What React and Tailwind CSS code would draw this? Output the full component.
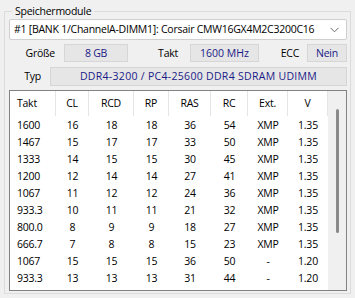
import React from "react"

const rows = [
  ["1600", "16", "18", "18", "36", "54", "XMP", "1.35"],
  ["1467", "15", "17", "17", "33", "50", "XMP", "1.35"],
  ["1333", "14", "15", "15", "30", "45", "XMP", "1.35"],
  ["1200", "12", "14", "14", "27", "41", "XMP", "1.35"],
  ["1067", "11", "12", "12", "24", "36", "XMP", "1.35"],
  ["933.3", "10", "11", "11", "21", "32", "XMP", "1.35"],
  ["800.0", "8", "9", "9", "18", "27", "XMP", "1.35"],
  ["666.7", "7", "8", "8", "15", "23", "XMP", "1.35"],
  ["1067", "15", "15", "15", "36", "50", "-", "1.20"],
  ["933.3", "13", "13", "13", "31", "44", "-", "1.20"],
]

const headers = ["Takt", "CL", "RCD", "RP", "RAS", "RC", "Ext.", "V"]
const cols = "grid-cols-[46px_33px_45px_35px_42px_37px_40px_40px]"

function ValueBox({ children, className = "" }) {
  return (
    <div className={"h-[18px] flex items-center justify-center bg-[#e6e6e6] border border-[#d6d6d6] text-[#1a1a86] " + className}>
      {children}
    </div>
  )
}

export default function App() {
  return (
    <div className="w-[355px] h-[298px] bg-[#f0f0f0] text-black text-[10.5px] tracking-[-0.25px] leading-none overflow-hidden" style={{ fontFamily: '"Open Sans", "Noto Sans", sans-serif' }}>
      <fieldset className="ml-[4px] mt-[3px] w-[347px] h-[291px] border border-[#dcdcdc] pl-[4px] pr-[3px]">
        <legend className="ml-[3px] px-[3px] h-[16px] leading-[16px]">Speichermodule</legend>

        <div className="h-[21px] bg-white border border-[#cfcfcf] rounded-[2px] flex items-center pl-[4px] pr-[7px]">
          <span className="flex-1 whitespace-nowrap">#1 [BANK 1/ChannelA-DIMM1]: Corsair CMW16GX4M2C3200C16</span>
          <svg width="9" height="6" viewBox="0 0 9 6" className="ml-1">
            <path d="M0.5 0.8 L4.5 4.8 L8.5 0.8" fill="none" stroke="#6a6a6a" strokeWidth="1" />
          </svg>
        </div>

        <div className="mt-[4px] flex items-center">
          <span className="w-[55px] text-right pr-[9px]">Größe</span>
          <ValueBox className="w-[64px]">8 GB</ValueBox>
          <span className="w-[62px] text-right pr-[12px]">Takt</span>
          <ValueBox className="w-[69px] tracking-normal">1600 MHz</ValueBox>
          <span className="w-[48px] text-right pr-[8px]">ECC</span>
          <ValueBox className="w-[40px]">Nein</ValueBox>
        </div>

        <div className="mt-[5px] flex items-center">
          <span className="w-[41px] text-right pr-[9px]">Typ</span>
          <ValueBox className="flex-1 h-[19px] tracking-[0.3px]">DDR4-3200 / PC4-25600 DDR4 SDRAM UDIMM</ValueBox>
        </div>

        <div className="mt-[4px] h-[201px] bg-white border border-[#828282] flex overflow-hidden">
          <div className="w-[318px]">
            <div className={"grid h-[25px] " + cols}>
              {headers.map((h, i) => (
                <div key={h} className={"flex items-center border-r border-[#e5e5e5] " + (i === 0 ? "pl-[7px]" : "justify-center")}>
                  {h}
                </div>
              ))}
            </div>
            <div className="pt-[1px]">
              {rows.map((r, ri) => (
                <div key={ri} className={"grid h-[17px] " + cols}>
                  {r.map((c, ci) => (
                    <div key={ci} className={"flex items-center " + (ci === 0 ? "pl-[7px]" : "justify-center")}>
                      {c}
                    </div>
                  ))}
                </div>
              ))}
            </div>
          </div>
          <div className="flex-1 bg-[#f0f0f0] flex justify-center pt-[18px]">
            <div className="w-[3px] h-[124px] bg-[#8a8a8a] rounded-full" />
          </div>
        </div>
      </fieldset>
    </div>
  )
}
